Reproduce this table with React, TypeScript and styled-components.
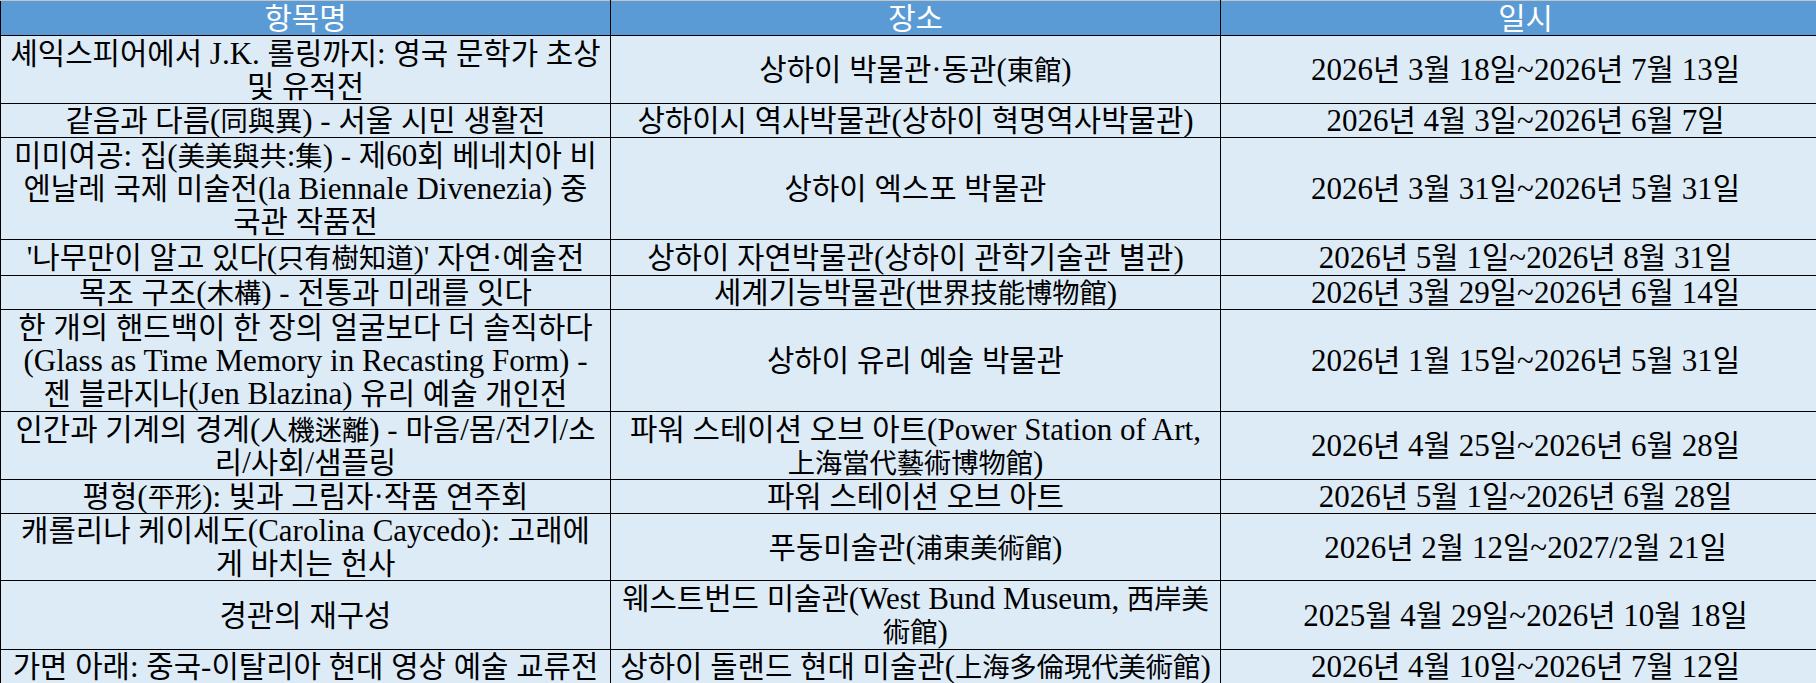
import React from "react";
import styled, { createGlobalStyle } from "styled-components";

interface Exhibition {
  h: number;
  title: string;
  place: string;
  date: string;
}

const exhibitions: Exhibition[] = [
  {
    h: 68,
    title: "셰익스피어에서 J.K. 롤링까지: 영국 문학가 초상\n및 유적전",
    place: "상하이 박물관·동관(東館)",
    date: "2026년 3월 18일~2026년 7월 13일",
  },
  {
    h: 34,
    title: "같음과 다름(同與異) - 서울 시민 생활전",
    place: "상하이시 역사박물관(상하이 혁명역사박물관)",
    date: "2026년 4월 3일~2026년 6월 7일",
  },
  {
    h: 102,
    title:
      "미미여공: 집(美美與共:集) - 제60회 베네치아 비\n엔날레 국제 미술전(la Biennale Divenezia) 중\n국관 작품전",
    place: "상하이 엑스포 박물관",
    date: "2026년 3월 31일~2026년 5월 31일",
  },
  {
    h: 36,
    title: "'나무만이 알고 있다(只有樹知道)' 자연·예술전",
    place: "상하이 자연박물관(상하이 관학기술관 별관)",
    date: "2026년 5월 1일~2026년 8월 31일",
  },
  {
    h: 34,
    title: "목조 구조(木構) - 전통과 미래를 잇다",
    place: "세계기능박물관(世界技能博物館)",
    date: "2026년 3월 29일~2026년 6월 14일",
  },
  {
    h: 102,
    title:
      "한 개의 핸드백이 한 장의 얼굴보다 더 솔직하다\n(Glass as Time Memory in Recasting Form) -\n젠 블라지나(Jen Blazina) 유리 예술 개인전",
    place: "상하이 유리 예술 박물관",
    date: "2026년 1월 15일~2026년 5월 31일",
  },
  {
    h: 68,
    title: "인간과 기계의 경계(人機迷離) - 마음/몸/전기/소\n리/사회/샘플링",
    place: "파워 스테이션 오브 아트(Power Station of Art,\n上海當代藝術博物館)",
    date: "2026년 4월 25일~2026년 6월 28일",
  },
  {
    h: 34,
    title: "평형(平形): 빛과 그림자·작품 연주회",
    place: "파워 스테이션 오브 아트",
    date: "2026년 5월 1일~2026년 6월 28일",
  },
  {
    h: 67,
    title: "캐롤리나 케이세도(Carolina Caycedo): 고래에\n게 바치는 헌사",
    place: "푸둥미술관(浦東美術館)",
    date: "2026년 2월 12일~2027/2월 21일",
  },
  {
    h: 69,
    title: "경관의 재구성",
    place: "웨스트번드 미술관(West Bund Museum, 西岸美\n術館)",
    date: "2025월 4월 29일~2026년 10월 18일",
  },
  {
    h: 34,
    title: "가면 아래: 중국-이탈리아 현대 영상 예술 교류전",
    place: "상하이 돌랜드 현대 미술관(上海多倫現代美術館)",
    date: "2026년 4월 10일~2026년 7월 12일",
  },
];

const GlobalStyle = createGlobalStyle`
  html, body {
    margin: 0;
    padding: 0;
    background: #ffffff;
  }
`;

const Sheet = styled.table`
  width: 1815px;
  table-layout: fixed;
  border-collapse: collapse;
  font-family: "Liberation Serif", "Noto Sans CJK KR", serif;
  font-size: 31px;
  font-weight: 400;
  line-height: 33px;
  color: #000000;
`;

const HeadRow = styled.tr`
  height: 34px;
`;

const HeadCell = styled.th`
  width: 605px;
  padding: 1px 2px 0;
  background: #5b9bd5;
  color: #ffffff;
  font-weight: 400;
  text-align: center;
  vertical-align: middle;
  border: 1px solid #000000;
  border-top-color: #c6c6c6;
`;

const Row = styled.tr<{ $h: number }>`
  height: ${(p) => p.$h}px;
`;

const Cell = styled.td`
  padding: 0 2px;
  background: #ddebf7;
  text-align: center;
  vertical-align: middle;
  white-space: pre;
  border: 1px solid #000000;
`;

// hangul runs a touch narrower than the latin face, hanzi narrower still;
// zero line-height keeps the mixed sizes from stretching the rows
const Cjk = styled.span<{ $han?: boolean }>`
  font-family: "Noto Sans CJK KR", sans-serif;
  font-size: ${(p) => (p.$han ? "0.88em" : "0.96em")};
  line-height: 0;
`;

const CJK_RUN = /([\u1100-\u11ff\u3130-\u318f\uac00-\ud7af]+|[\u3000-\u303f\u3400-\u9fff\uf900-\ufaff]+)/;
const HAN = /^[\u3000-\u303f\u3400-\u9fff\uf900-\ufaff]/;

const renderText = (text: string) =>
  text.split(CJK_RUN).map((part, i) =>
    i % 2 === 1 ? (
      <Cjk key={i} $han={HAN.test(part)}>
        {part}
      </Cjk>
    ) : (
      <React.Fragment key={i}>{part}</React.Fragment>
    )
  );

const App: React.FC = () => {
  return (
    <>
      <GlobalStyle />
      <Sheet>
        <thead>
          <HeadRow>
            <HeadCell>{renderText("항목명")}</HeadCell>
            <HeadCell>{renderText("장소")}</HeadCell>
            <HeadCell>{renderText("일시")}</HeadCell>
          </HeadRow>
        </thead>
        <tbody>
          {exhibitions.map((ex) => (
            <Row $h={ex.h} key={ex.title}>
              <Cell>{renderText(ex.title)}</Cell>
              <Cell>{renderText(ex.place)}</Cell>
              <Cell>{renderText(ex.date)}</Cell>
            </Row>
          ))}
        </tbody>
      </Sheet>
    </>
  );
};

export default App;
